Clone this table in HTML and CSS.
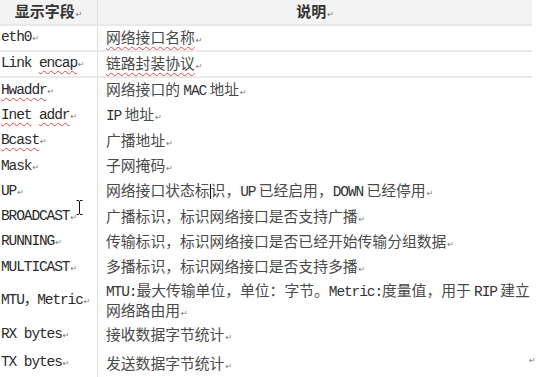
FILE: index.html
```html
<!DOCTYPE html>
<html lang="zh-CN">
  <head>
    <meta charset="UTF-8" />
    <meta name="viewport" content="width=device-width, initial-scale=1.0" />
    <title>ifconfig 显示字段</title>
    <link rel="stylesheet" href="styles.css">
  </head>

  <body>
    <table class="fields">
      <thead>
        <tr class="head ruled">
          <th class="key">显示字段<span class="pm">↵</span></th>
          <th class="desc">说明<span class="pm">↵</span></th>
        </tr>
      </thead>
      <tbody>
        <tr class="ruled">
          <td class="key">eth0<span class="pm">↵</span></td>
          <td class="desc"><span class="typo">网络接口名称</span><span class="pm">↵</span></td>
        </tr>
        <tr class="ruled">
          <td class="key">Link <span class="typo">encap</span><span class="pm">↵</span></td>
          <td class="desc"><span class="typo">链路封装协议</span><span class="pm">↵</span></td>
        </tr>
        <tr>
          <td class="key"><span class="typo">Hwaddr</span><span class="pm">↵</span></td>
          <td class="desc">网络接口的 <span class="en">MAC</span> 地址<span class="pm">↵</span></td>
        </tr>
        <tr>
          <td class="key"><span class="typo">Inet</span> <span class="typo">addr</span><span class="pm">↵</span></td>
          <td class="desc"><span class="en">IP</span> 地址<span class="pm">↵</span></td>
        </tr>
        <tr>
          <td class="key"><span class="typo">Bcast</span><span class="pm">↵</span></td>
          <td class="desc">广播地址<span class="pm">↵</span></td>
        </tr>
        <tr>
          <td class="key">Mask<span class="pm">↵</span></td>
          <td class="desc">子网掩码<span class="pm">↵</span></td>
        </tr>
        <tr>
          <td class="key">UP<span class="pm">↵</span></td>
          <td class="desc">网络接口状态标<span class="caret"></span>识，<span class="en">UP</span> 已经启用，<span class="en">DOWN</span> 已经停用<span class="pm">↵</span></td>
        </tr>
        <tr>
          <td class="key">BROADCAST<span class="pm">↵</span></td>
          <td class="desc">广播标识，标识网络接口是否支持广播<span class="pm">↵</span></td>
        </tr>
        <tr>
          <td class="key">RUNNING<span class="pm">↵</span></td>
          <td class="desc">传输标识，标识网络接口是否已经开始传输分组数据<span class="pm">↵</span></td>
        </tr>
        <tr>
          <td class="key">MULTICAST<span class="pm">↵</span></td>
          <td class="desc">多播标识，标识网络接口是否支持多播<span class="pm">↵</span></td>
        </tr>
        <tr class="tall">
          <td class="key">MTU，Metric<span class="pm">↵</span></td>
          <td class="desc"><span class="en">MTU:</span>最大传输单位，单位：字节。<span class="en">Metric:</span>度量值，用于 <span class="en">RIP</span> 建立<br>网络路由用<span class="pm">↵</span></td>
        </tr>
        <tr>
          <td class="key">RX bytes<span class="pm">↵</span></td>
          <td class="desc">接收数据字节统计<span class="pm">↵</span></td>
        </tr>
        <tr class="last">
          <td class="key">TX bytes<span class="pm">↵</span></td>
          <td class="desc">发送数据字节统计<span class="pm">↵</span></td>
        </tr>
      </tbody>
    </table>

    <!-- end-of-cell mark past the table edge -->
    <span class="pm edge">↵</span>

    <!-- mouse I-beam pointer -->
    <svg class="ibeam" width="7" height="15" viewBox="0 0 7 15">
      <path d="M0.5 0.5h2.5M4 0.5h2.5M3.5 1v13M0.5 14.5h2.5M4 14.5h2.5" stroke="#111" stroke-width="1" fill="none" />
    </svg>
  </body>
</html>
```

FILE: styles.css
```css
body {
  margin: 0;
  background: #fff;
  position: relative;
  height: 377px;
  overflow: hidden;
  font-family: "Liberation Mono", "Noto Sans CJK SC", monospace;
  font-size: 14.5px;
  color: #333;
}

.fields {
  width: 532px;
  border-collapse: separate;
  border-spacing: 0;
}

.fields th,
.fields td {
  padding: 0;
  height: 25.3px;
  line-height: 17px;
  vertical-align: middle;
  white-space: nowrap;
  box-sizing: border-box;
}

.key {
  width: 98px;
  padding-left: 1px !important;
  border-right: 1px solid #dedede;
  text-align: left;
  letter-spacing: -1.1px;
  color: #2a2a2a;
}

.desc {
  padding-left: 8px !important;
  text-align: left;
  font-family: "Noto Sans CJK SC", sans-serif;
  font-size: 14.8px;
  color: #4a4a4a;
}

.en {
  font-family: "Liberation Mono", monospace;
  font-size: 14.5px;
  letter-spacing: -1.1px;
  color: #333;
}

/* header row */
.head th {
  height: 26px;
  background: #f3f3f3;
  font-family: "Noto Sans CJK SC", sans-serif;
  font-weight: bold;
  font-size: 15px;
  letter-spacing: 0;
  color: #333;
  text-align: center;
}

.head th.key,
.head th.desc {
  padding-left: 0 !important;
}

.ruled th,
.ruled td {
  height: 26px;
  border-bottom: 2px solid #e9e9e9;
}

.tall td {
  height: 42px;
}

.last td {
  height: 30px;
  vertical-align: top;
  padding-top: 6px;
}

/* paragraph marks */
.pm {
  font-family: "DejaVu Sans", sans-serif;
  font-size: 8px;
  font-weight: normal;
  letter-spacing: 0;
  color: #777;
  margin-left: 1px;
}

/* spell-check squiggle */
.typo {
  text-decoration: underline wavy #e04848;
  text-decoration-thickness: 1px;
  text-underline-offset: 3px;
}

.caret {
  display: inline-block;
  width: 0;
  height: 15px;
  border-left: 1px solid #111;
  vertical-align: -3px;
}

.edge {
  position: absolute;
  left: 528px;
  top: 356px;
}

.ibeam {
  position: absolute;
  left: 76px;
  top: 200px;
}
```
